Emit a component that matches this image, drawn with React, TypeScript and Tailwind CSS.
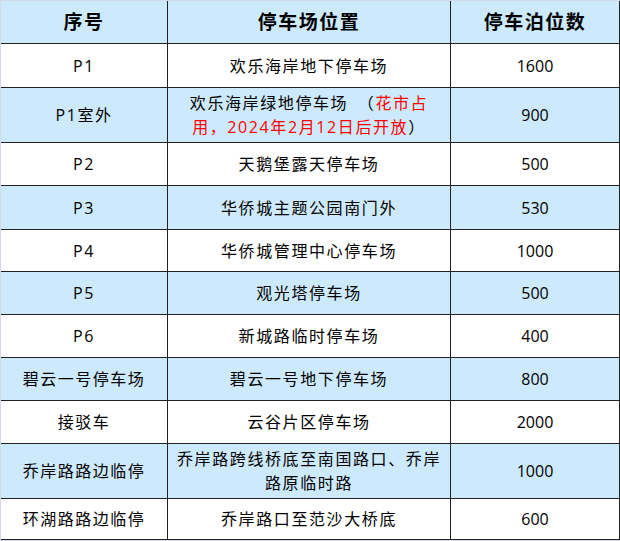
const rows: { no: string; place: React.ReactNode; count: string; blue?: boolean }[] = [
  { no: "P1", place: "欢乐海岸地下停车场", count: "1600" },
  {
    no: "P1室外",
    place: (
      <>
        欢乐海岸绿地停车场　（<span className="text-[#ff0000]">花市占</span>
        <br />
        <span className="text-[#ff0000]">用，2024年2月12日后开放</span>）
      </>
    ),
    count: "900",
    blue: true,
  },
  { no: "P2", place: "天鹅堡露天停车场", count: "500" },
  { no: "P3", place: "华侨城主题公园南门外", count: "530", blue: true },
  { no: "P4", place: "华侨城管理中心停车场", count: "1000" },
  { no: "P5", place: "观光塔停车场", count: "500", blue: true },
  { no: "P6", place: "新城路临时停车场", count: "400" },
  { no: "碧云一号停车场", place: "碧云一号地下停车场", count: "800", blue: true },
  { no: "接驳车", place: "云谷片区停车场", count: "2000" },
  {
    no: "乔岸路路边临停",
    place: (
      <>
        乔岸路跨线桥底至南国路口、乔岸
        <br />
        路原临时路
      </>
    ),
    count: "1000",
    blue: true,
  },
  { no: "环湖路路边临停", place: "乔岸路口至范沙大桥底", count: "600" },
];

const cell = "flex items-center justify-center text-center border-r border-b border-[#222222]";

export default function App() {
  return (
    <main
      className="h-[541px] w-[620px] bg-[#d3d9e6] pl-px pt-px text-black"
      style={{ fontFamily: '"Open Sans", "Noto Sans CJK SC", sans-serif' }}
    >
      <div className="grid grid-cols-[167px_283px_169px] grid-rows-[43px_44px_55px_43px_44px_42px_43px_43px_43px_43px_55px_41px]">
        <div className={`${cell} bg-[#cdeafd] text-[19px] font-bold tracking-[1.5px]`}>序号</div>
        <div className={`${cell} bg-[#cdeafd] text-[19px] font-bold tracking-[1.5px]`}>停车场位置</div>
        <div className={`${cell} bg-[#cdeafd] text-[19px] font-bold tracking-[1.5px]`}>停车泊位数</div>

        {rows.map((r) => {
          const bg = r.blue ? "bg-[#cdeafd]" : "bg-white";
          return (
            <div key={r.no} className="contents">
              <div className={`${cell} ${bg} text-[16px] tracking-[1.5px]`}>{r.no}</div>
              <div className={`${cell} ${bg} text-[16px] leading-[24px] tracking-[1.6px]`}>
                <div>{r.place}</div>
              </div>
              <div className={`${cell} ${bg} text-[16px]`}>{r.count}</div>
            </div>
          );
        })}
      </div>
    </main>
  );
}
